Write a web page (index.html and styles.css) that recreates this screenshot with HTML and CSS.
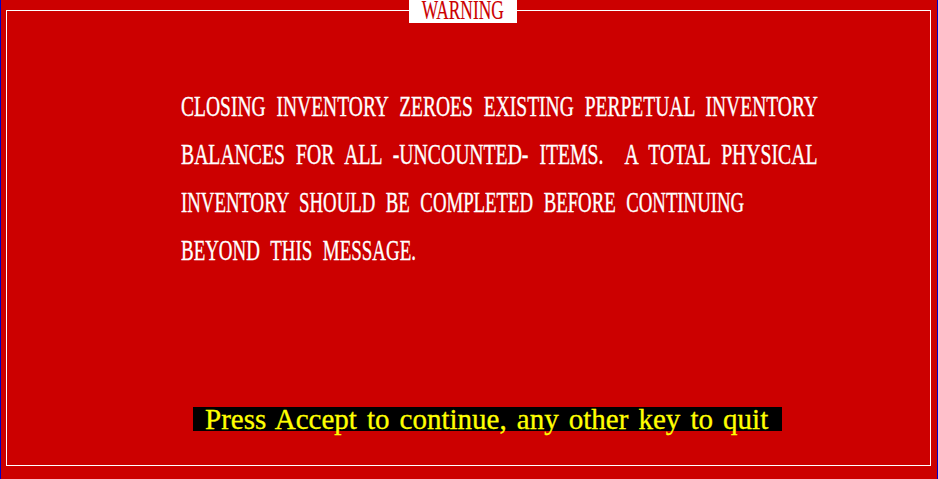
FILE: index.html
```html
<!DOCTYPE html>
<html>
<head>
<meta charset="utf-8">
<link rel="stylesheet" href="styles.css">
</head>
<body>
<div class="screen">
  <div class="frame">
    <div class="label"><span class="label-text">WARNING</span></div>
    <div class="message">
      <div class="line line-1">CLOSING INVENTORY ZEROES EXISTING PERPETUAL INVENTORY</div>
      <div class="line line-2">BALANCES FOR ALL -UNCOUNTED- ITEMS.  A TOTAL PHYSICAL</div>
      <div class="line line-3">INVENTORY SHOULD BE COMPLETED BEFORE CONTINUING</div>
      <div class="line line-4">BEYOND THIS MESSAGE.</div>
    </div>
    <div class="prompt-row">
      <div class="prompt">Press Accept to continue, any other key to quit</div>
    </div>
  </div>
</div>
</body>
</html>
```
FILE: styles.css
```css
html, body {
  margin: 0;
  padding: 0;
  background: #cc0000;
}
.screen {
  width: 938px;
  height: 479px;
  box-sizing: border-box;
  background: #cc0000;
  border-left: 1px solid #0000c8;
  border-right: 1px solid #0000c8;
  padding: 10px 6px 0 5px;
  font-family: "Liberation Serif", "Times New Roman", serif;
}
.frame {
  height: 456px;
  box-sizing: border-box;
  border: 1px solid #ffffff;
  position: relative;
  display: flex;
  flex-direction: column;
}
.label {
  position: absolute;
  left: 402px;
  top: -11px;
  width: 108px;
  height: 23px;
  background: #ffffff;
  color: #cc0000;
  font-size: 27px;
  line-height: 21px;
  display: flex;
  justify-content: center;
}
.label-text {
  display: inline-block;
  white-space: pre;
  transform: scaleX(0.645);
  transform-origin: 50% 0;
  -webkit-text-stroke: 0.2px #cc0000;
}
.message {
  padding: 71px 0 0 174px;
  color: #ffffff;
  font-size: 29px;
  line-height: 48px;
  -webkit-text-stroke: 0.35px #ffffff;
}
.line {
  white-space: pre;
  transform-origin: 0 0;
  word-spacing: 9px;
}
.line-1 { transform: scaleX(0.673); }
.line-2 { transform: scaleX(0.679); }
.line-3 { transform: scaleX(0.648); }
.line-4 { transform: scaleX(0.653); }
.prompt-row {
  margin-top: auto;
  margin-bottom: 34px;
  padding-left: 186px;
  display: flex;
}
.prompt {
  background: #000000;
  color: #ffff00;
  height: 24px;
  line-height: 24px;
  font-size: 29px;
  padding: 0 14px 0 12px;
  white-space: pre;
  word-spacing: 2.85px;
  -webkit-text-stroke: 0.3px #ffff00;
}
```
